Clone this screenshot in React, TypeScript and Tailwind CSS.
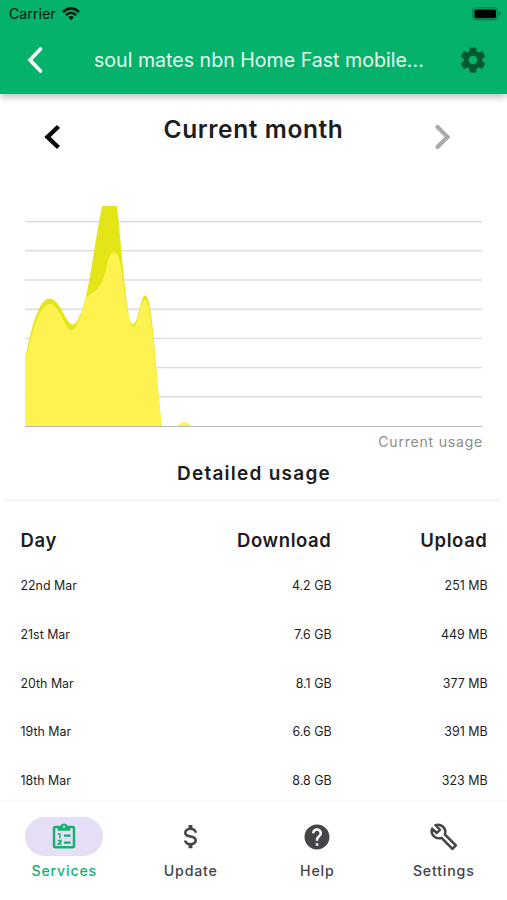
import { MdHelp } from "react-icons/md";

const usage = [
  { day: "22nd Mar", download: "4.2 GB", upload: "251 MB" },
  { day: "21st Mar", download: "7.6 GB", upload: "449 MB" },
  { day: "20th Mar", download: "8.1 GB", upload: "377 MB" },
  { day: "19th Mar", download: "6.6 GB", upload: "391 MB" },
  { day: "18th Mar", download: "8.8 GB", upload: "323 MB" },
];

const gridLines = [15.7, 44.8, 74, 103.2, 132.4, 161.6, 190.8];

function WifiIcon() {
  return (
    <svg width="18" height="14" viewBox="0 0 18 14" fill="none" stroke="#06150d">
      <path d="M1 5.1Q9-2.4 17 5.1" strokeWidth="2.5" />
      <path d="M3.9 8.1Q9 3.3 14.1 8.1" strokeWidth="2.3" />
      <path d="M9 13.2L6.1 10.3Q9 7.8 11.9 10.3Z" fill="#06150d" stroke="none" />
    </svg>
  );
}

function BatteryIcon() {
  return (
    <svg width="30" height="14" viewBox="0 0 30 14">
      <rect x="0.8" y="0.8" width="24.6" height="12" rx="3.2" fill="none" stroke="#05713f" strokeWidth="1.1" />
      <rect x="2.4" y="2.4" width="21.6" height="8.8" rx="1.6" fill="#000" />
      <path d="M27 4.6Q29 5.2 29 6.8T27 9Z" fill="#05713f" />
    </svg>
  );
}

function CogIcon() {
  return (
    <svg width="30" height="30" viewBox="0 0 24 24" fill="#04592f">
      <path d="M12,15.5A3.5,3.5 0 0,1 8.5,12A3.5,3.5 0 0,1 12,8.5A3.5,3.5 0 0,1 15.5,12A3.5,3.5 0 0,1 12,15.5M19.43,12.97C19.47,12.65 19.5,12.33 19.5,12C19.5,11.67 19.47,11.34 19.43,11L21.54,9.37C21.73,9.22 21.78,8.95 21.66,8.73L19.66,5.27C19.54,5.05 19.27,4.96 19.05,5.05L16.56,6.05C16.04,5.66 15.5,5.32 14.87,5.07L14.5,2.42C14.46,2.18 14.25,2 14,2H10C9.75,2 9.54,2.18 9.5,2.42L9.13,5.07C8.5,5.32 7.96,5.66 7.44,6.05L4.95,5.05C4.73,4.96 4.46,5.05 4.34,5.27L2.34,8.73C2.21,8.95 2.27,9.22 2.46,9.37L4.57,11C4.53,11.34 4.5,11.67 4.5,12C4.5,12.33 4.53,12.65 4.57,12.97L2.46,14.63C2.27,14.78 2.21,15.05 2.34,15.27L4.34,18.73C4.46,18.95 4.73,19.03 4.95,18.95L7.44,17.94C7.96,18.34 8.5,18.68 9.13,18.93L9.5,21.58C9.54,21.82 9.75,22 10,22H14C14.25,22 14.46,21.82 14.5,21.58L14.87,18.93C15.5,18.67 16.04,18.34 16.56,17.94L19.05,18.95C19.27,19.03 19.54,18.95 19.66,18.73L21.66,15.27C21.78,15.05 21.73,14.78 21.54,14.63L19.43,12.97Z" />
    </svg>
  );
}

function ClipboardIcon() {
  return (
    <svg width="30" height="30" viewBox="0 0 24 24" fill="none" stroke="currentColor">
      <rect x="4" y="4" width="16" height="16.2" rx="1.2" strokeWidth="2" />
      <path d="M7 3.6V7H17V3.6H15A3.1 3.1 0 0 0 9 3.6Z" fill="currentColor" stroke="none" />
      <circle cx="12" cy="3.8" r="0.9" fill="#e6def6" stroke="none" />
      <path d="M12 10.8H17.2M12 16.5H17.2" strokeWidth="1.8" />
      <path d="M7.1 9.5H8.7V12.9" strokeWidth="1.2" />
      <path d="M7 14.8H9.6V15.5L7.5 17.5H10.1" strokeWidth="1.2" />
    </svg>
  );
}

function DollarIcon() {
  return (
    <svg width="31" height="31" viewBox="0 0 24 24" fill="currentColor">
      <path d="M7,15H9C9,16.08 10.37,17 12,17C13.63,17 15,16.08 15,15C15,13.9 13.96,13.5 11.76,12.97C9.64,12.44 7,11.78 7,9C7,7.21 8.47,5.69 10.5,5.18V3H13.5V5.18C15.53,5.69 17,7.21 17,9H15C15,7.92 13.63,7 12,7C10.37,7 9,7.92 9,9C9,10.1 10.04,10.5 12.24,11.03C14.36,11.56 17,12.22 17,15C17,16.79 15.53,18.31 13.5,18.82V21H10.5V18.82C8.47,18.31 7,16.79 7,15Z" />
    </svg>
  );
}

function WrenchIcon() {
  return (
    <svg width="30" height="30" viewBox="0 0 24 24" fill="none" stroke="currentColor" strokeWidth="2" strokeLinejoin="round">
      <path d="M5.2 2.5L8.8 6.2L6.3 8.8L2.5 5.3C1 9.6 5 14.3 10 12.7L18.7 21.5L21.5 18.7L12.7 10C14.3 5 9.6 1 5.2 2.5Z" />
    </svg>
  );
}

function UsageChart() {
  return (
    <svg width="458" height="222" viewBox="0 0 458 222" className="ml-[25px] block shrink-0">
      {gridLines.map((y) => (
        <line key={y} x1="0" x2="457" y1={y} y2={y} stroke="#dcdcdc" strokeWidth="1.4" />
      ))}
      <path
        d="M0.5 152C6 122 14 92.5 24.5 92.5C35 92.5 41 118.5 47.5 118.5C53 118.5 57 104 61 91C67 62 71 30 77 0H92C96 34 98 75 103.5 108C106 121 109 121 112 112C115 104 117 89.5 120 89.5C128 89.5 130 160 137 220.5H0.5Z"
        fill="#e3e516"
      />
      <path
        d="M0.5 156C6 128 14 98 25 98C34 98 40 124 46.5 124C53 124 55 108 61 92C68 85 73 87 79 71C83 57 84 46 89 46C97 46 97 80 103.5 109C106 120 107 121 109 120.5C113 119 116 93.5 120 93.5C127 93.5 130 162 137 220.5H0.5Z"
        fill="#fef250"
      />
      <path d="M152 220.5Q159 212 167 220.5Z" fill="#fef250" />
      <line x1="0" x2="457" y1="220.5" y2="220.5" stroke="#b9b9b9" strokeWidth="1.2" />
    </svg>
  );
}

const tabs = [
  { label: "Services", icon: <ClipboardIcon />, active: true },
  { label: "Update", icon: <DollarIcon />, active: false },
  { label: "Help", icon: <MdHelp size={30} />, active: false },
  { label: "Settings", icon: <WrenchIcon />, active: false },
];

export default function App() {
  return (
    <div className="flex h-[900px] w-[507px] flex-col overflow-hidden bg-white font-['Inter',sans-serif] text-[#1d1d1f]">
      <header className="h-[94px] shrink-0 bg-[#04b26b] shadow-[0_3px_7px_rgba(0,0,0,0.25)]">
        <div className="flex h-[27px] items-center justify-between pr-[5px] pl-[9px]">
          <div className="flex items-center gap-[6px]">
            <span className="text-[14.2px] leading-5 text-[#06150d]">Carrier</span>
            <WifiIcon />
          </div>
          <BatteryIcon />
        </div>
        <div className="flex h-[66px] items-center">
          <svg width="20" height="28" viewBox="0 0 20 28" fill="none" className="ml-[25px]">
            <path d="M15.5 3L5 14L15.5 25" stroke="#fff" strokeWidth="3.6" strokeLinecap="round" />
          </svg>
          <h1 className="ml-[49px] w-[364px] text-[19.6px] leading-6 whitespace-nowrap text-white/90">
            soul mates nbn Home Fast mobile...
          </h1>
          <CogIcon />
        </div>
      </header>

      <section className="flex h-[112px] shrink-0 items-start">
        <svg width="20" height="26" viewBox="0 0 20 26" fill="none" className="mt-[30px] ml-[42px]">
          <path d="M16.5 2.5L5.500 13L16.500 23.500" stroke="#0a0a0a" strokeWidth="4.4" />
        </svg>
        <h2 className="mt-[19px] w-[371px] pl-[12px] text-center text-[24.5px] leading-8 font-semibold tracking-[0.6px]">
          Current month
        </h2>
        <svg width="20" height="26" viewBox="0 0 20 26" fill="none" className="mt-[30px]">
          <path d="M4.5 3L14.5 13L4.5 23" stroke="#ababab" strokeWidth="4.2" strokeLinecap="round" />
        </svg>
      </section>

      <UsageChart />
      <div className="h-[29px] shrink-0 pt-[4px] pr-[24px] text-right text-[14px] leading-5 tracking-[0.8px] text-[#8b8b8b]">
        Current usage
      </div>
      <h2 className="h-[42px] shrink-0 pt-[5px] pl-px text-center text-[19px] leading-6 font-semibold tracking-[1.25px]">
        Detailed usage
      </h2>
      <div className="mx-1 h-[3px] shrink-0 bg-[#f7f7f7]" />

      <section className="flex h-[298px] shrink-0 flex-col overflow-hidden pt-[19px] pl-[20.5px]">
        <div className="flex h-[40px] shrink-0 items-center text-[18.5px] font-semibold tracking-[0.6px]">
          <span className="w-[120px]">Day</span>
          <span className="w-[191px] text-right">Download</span>
          <span className="w-[156px] text-right">Upload</span>
        </div>
        <div className="pt-px">
          {usage.map((row) => (
            <div key={row.day} className="flex h-[48.8px] items-center text-[12.4px]">
              <span className="w-[120px]">{row.day}</span>
              <span className="w-[191px] text-right">{row.download}</span>
              <span className="w-[156px] text-right">{row.upload}</span>
            </div>
          ))}
        </div>
      </section>

      <nav className="grid flex-1 grid-cols-4 border-t-2 border-[#f7f7f7] bg-white pt-[15px] pl-px">
        {tabs.map((tab) => (
          <div
            key={tab.label}
            className={`flex flex-col items-center ${tab.active ? "text-[#14b272]" : "text-[#444449]"}`}
          >
            <div
              className={`flex h-[39px] w-[78px] items-center justify-center rounded-full ${tab.active ? "bg-[#e6def6]" : ""}`}
            >
              {tab.icon}
            </div>
            <span className="mt-[5px] text-[14.2px] leading-5 font-medium tracking-[0.8px]">{tab.label}</span>
          </div>
        ))}
      </nav>
    </div>
  );
}
